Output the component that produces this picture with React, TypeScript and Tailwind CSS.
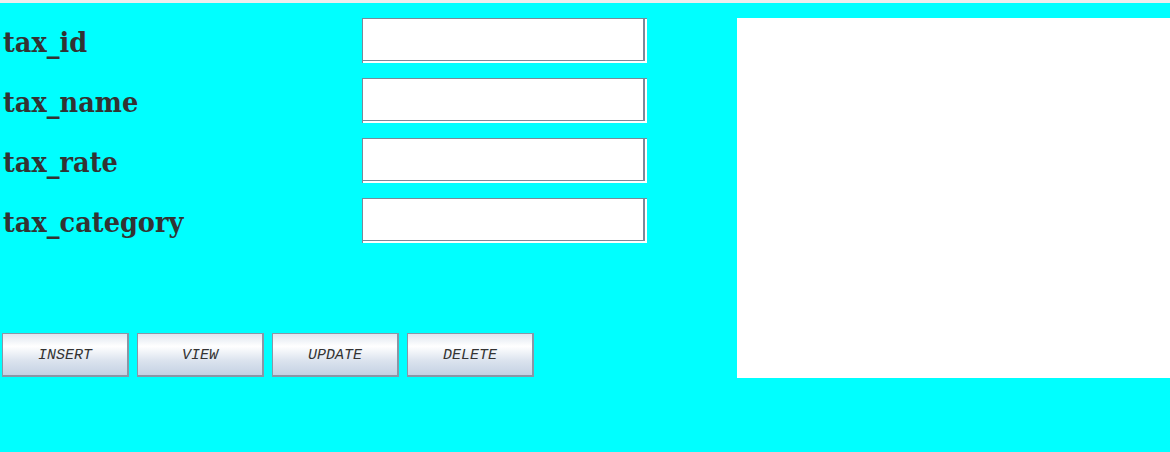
import React from "react";

const fields = ["tax_id", "tax_name", "tax_rate", "tax_category"];
const buttons = ["INSERT", "VIEW", "UPDATE", "DELETE"];

function Field() {
  return (
    <div className="w-[285px] h-[45px] bg-white border-l border-t border-[#7a8a99] flex">
      <div className="w-[282px] h-[42px] border-r-2 border-b border-[#7a8a99] bg-white" />
    </div>
  );
}

export default function App() {
  return (
    <div className="w-[1170px] h-[452px] bg-[#00ffff] overflow-hidden">
      <div className="h-[3px] bg-[#eeeeee]" />
      <div className="flex pt-[15px]">
        <div className="w-[737px] flex flex-col">
          <div className="flex flex-col gap-[15px]">
            {fields.map((f) => (
              <div key={f} className="flex h-[45px] items-center">
                <div
                  className="w-[362px] pl-[3px] pt-[4px] text-[28.5px] leading-[45px] font-bold text-[#333333]"
                  style={{ fontFamily: '"DejaVu Serif Condensed", "DejaVu Serif", serif' }}
                >
                  {f}
                </div>
                <Field />
              </div>
            ))}
          </div>
          <div className="flex gap-[8px] pl-[2px] mt-[90px]">
            {buttons.map((b) => (
              <div
                key={b}
                className="w-[127px] h-[44px] pt-[4px] border border-[#8a96a6] border-r-2 border-b-2 flex items-center justify-center bg-[linear-gradient(to_bottom,#dfe6ef_0%,#ffffff_30%,#dbe3ee_65%,#c4d1e3_100%)]"
              >
                <span
                  className="italic text-[15px] text-[#333333]"
                  style={{ fontFamily: '"Liberation Mono", monospace' }}
                >
                  {b}
                </span>
              </div>
            ))}
          </div>
        </div>
        <div className="flex-1 h-[360px] bg-white" />
      </div>
    </div>
  );
}
